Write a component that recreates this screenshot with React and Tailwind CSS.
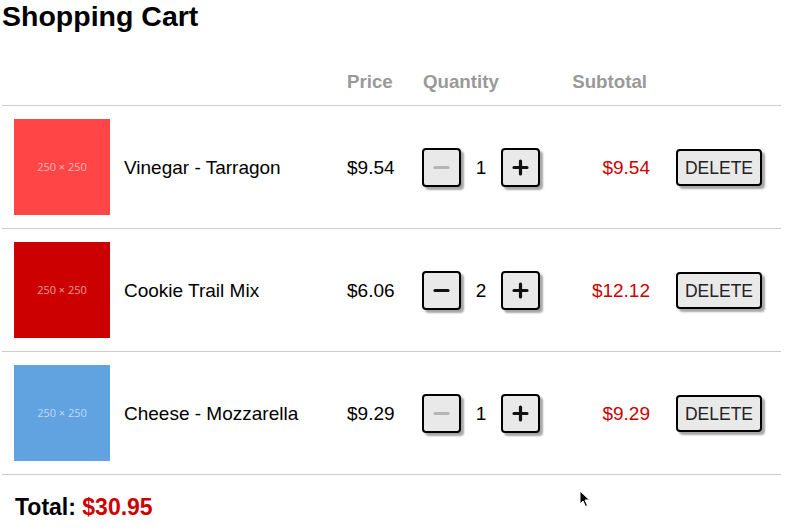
import React, { useState } from "react";

const initialItems = [
  { id: 1, name: "Vinegar - Tarragon", price: 9.54, qty: 1, color: "bg-[#ff4545]" },
  { id: 2, name: "Cookie Trail Mix", price: 6.06, qty: 2, color: "bg-[#cc0000]" },
  { id: 3, name: "Cheese - Mozzarella", price: 9.29, qty: 1, color: "bg-[#60a3e0]" },
];

const btn =
  "flex items-center justify-center border-2 border-black rounded-[4px] bg-[#e9e9e9] shadow-[3px_3px_2px_rgba(0,0,0,0.35)]";

function MinusIcon({ disabled }) {
  return (
    <svg width="17" height="17" viewBox="0 0 17 17">
      <path
        d="M2 8.5h13"
        stroke={disabled ? "#b5b5b5" : "#111"}
        strokeWidth="3.2"
        strokeLinecap="round"
      />
    </svg>
  );
}

function PlusIcon() {
  return (
    <svg width="17" height="17" viewBox="0 0 17 17">
      <path
        d="M2 8.5h13M8.5 2v13"
        stroke="#111"
        strokeWidth="3.2"
        strokeLinecap="round"
      />
    </svg>
  );
}

export default function App() {
  const [items, setItems] = useState(initialItems);

  const changeQty = (id, delta) => {
    setItems(
      items.map((it) =>
        it.id === id ? { ...it, qty: Math.max(1, it.qty + delta) } : it,
      ),
    );
  };

  const total = items.reduce((sum, it) => sum + it.price * it.qty, 0);

  return (
    <div className="relative w-[796px] h-[530px] bg-white overflow-hidden font-['Liberation_Sans',Arial,sans-serif] text-black">
      <h1 className="pl-[2px] text-[28.5px] leading-[32px] font-bold">Shopping Cart</h1>

      <div className="w-[779px] ml-[2px]">
        {/* Header */}
        <div className="flex pt-[39px] pb-[12px] border-b border-[#cccccc] text-[18.72px] leading-[22px] font-bold text-[#999999]">
          <div className="w-[345px]"></div>
          <div className="w-[75px]">Price</div>
          <div className="w-[130px] pl-[1px]">Quantity</div>
          <div className="w-[98px] text-right pr-[3px]">Subtotal</div>
        </div>

        {/* Rows */}
        {items.map((item) => (
          <div
            key={item.id}
            className="flex items-center py-[13px] border-b border-[#cccccc] text-[19px] leading-[22px]"
          >
            <div className="pl-[12px] pr-[14px]">
              <div
                className={`w-[96px] h-[96px] ${item.color} flex items-center justify-center text-[11px] text-white/60 font-['Open_Sans',sans-serif]`}
              >
                250 × 250
              </div>
            </div>
            <div className="w-[223px] pt-[2px]">{item.name}</div>
            <div className="w-[75px] pt-[2px]">${item.price.toFixed(2)}</div>
            <div className="w-[130px] flex items-center">
              <button
                onClick={() => changeQty(item.id, -1)}
                className={`${btn} w-[39px] h-[39px]`}
              >
                <MinusIcon disabled={item.qty <= 1} />
              </button>
              <span className="w-[40px] text-center pt-[2px]">{item.qty}</span>
              <button
                onClick={() => changeQty(item.id, 1)}
                className={`${btn} w-[39px] h-[39px]`}
              >
                <PlusIcon />
              </button>
            </div>
            <div className="w-[98px] text-right text-[#cc0000] pt-[2px]">
              ${(item.price * item.qty).toFixed(2)}
            </div>
            <button
              onClick={() => setItems(items.filter((i) => i.id !== item.id))}
              className={`${btn} ml-[26px] w-[86px] h-[37px] text-[17.5px] text-[#222222] pt-[1px]`}
            >
              DELETE
            </button>
          </div>
        ))}

        {/* Total */}
        <div className="mt-[18px] pl-[13px] text-[23px] leading-[28px] font-bold">
          Total: <span className="text-[#cc0000]">${total.toFixed(2)}</span>
        </div>
      </div>

      {/* mouse pointer */}
      <svg
        className="absolute left-[579px] top-[490px]"
        width="12"
        height="18"
        viewBox="0 0 12 18"
      >
        <path
          d="M1 1v13l3-3 2.5 5.5 2-1L6 10h4.5z"
          fill="#000"
          stroke="#fff"
          strokeWidth="1"
          strokeLinejoin="round"
        />
      </svg>
    </div>
  );
}
